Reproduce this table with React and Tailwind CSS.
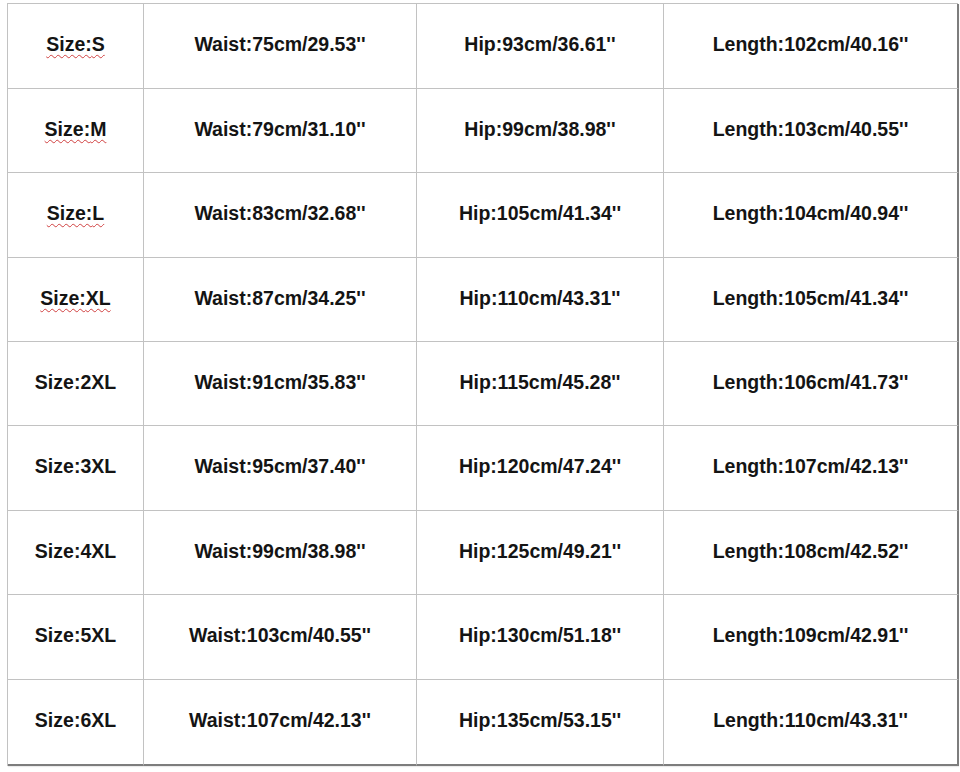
import React from "react";

const rows = [
  ["S", "75cm/29.53''", "93cm/36.61''", "102cm/40.16''", true],
  ["M", "79cm/31.10''", "99cm/38.98''", "103cm/40.55''", true],
  ["L", "83cm/32.68''", "105cm/41.34''", "104cm/40.94''", true],
  ["XL", "87cm/34.25''", "110cm/43.31''", "105cm/41.34''", true],
  ["2XL", "91cm/35.83''", "115cm/45.28''", "106cm/41.73''", false],
  ["3XL", "95cm/37.40''", "120cm/47.24''", "107cm/42.13''", false],
  ["4XL", "99cm/38.98''", "125cm/49.21''", "108cm/42.52''", false],
  ["5XL", "103cm/40.55''", "130cm/51.18''", "109cm/42.91''", false],
  ["6XL", "107cm/42.13''", "135cm/53.15''", "110cm/43.31''", false],
];

export default function App() {
  return (
    <div className="w-[960px] h-[772px] bg-white pt-[3px] pl-[7px]" style={{ fontFamily: '"Liberation Sans", Arial, sans-serif' }}>
      <div className="w-[951px] grid grid-cols-[136px_273px_247px_295px] grid-rows-[85px_84px_85px_84px_84px_85px_84px_85px_86px] border-l border-t border-[#c2c2c2] shadow-[1px_1px_1px_rgba(0,0,0,0.08)]">
        {rows.map((r, i) => {
          const last = i === rows.length - 1;
          const bb = last ? "border-b-2 border-b-[#7d7d7d]" : "border-b border-b-[#c2c2c2]";
          const base = `flex items-center justify-center pb-[2px] text-[19.5px] font-bold text-[#141414] ${bb}`;
          return (
            <React.Fragment key={i}>
              <div className={`${base} border-r border-r-[#c2c2c2]`}>
                <span className={r[4] ? "underline decoration-wavy decoration-[#d04040] decoration-1 underline-offset-[3px]" : ""}>
                  Size:{r[0]}
                </span>
              </div>
              <div className={`${base} border-r border-r-[#c2c2c2]`}>Waist:{r[1]}</div>
              <div className={`${base} border-r border-r-[#c2c2c2]`}>Hip:{r[2]}</div>
              <div className={`${base} border-r-2 border-r-[#7d7d7d]`}>Length:{r[3]}</div>
            </React.Fragment>
          );
        })}
      </div>
    </div>
  );
}
